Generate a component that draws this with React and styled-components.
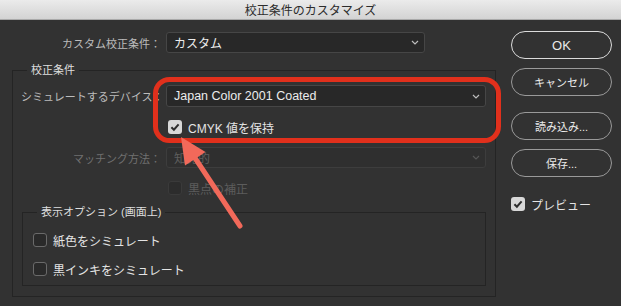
import React from 'react';
import styled, { createGlobalStyle } from 'styled-components';

const GlobalStyle = createGlobalStyle`
    body {
        margin: 0;
        background: #323232;
        font-family: "Liberation Sans", "Noto Sans CJK JP", sans-serif;
    }
`;

const Chevron = ({ color }) => (
    <svg width="8" height="5" viewBox="0 0 8 5">
        <path d="M1 1 L4 4 L7 1" fill="none" stroke={color} strokeWidth="1.2" />
    </svg>
);

const Check = () => (
    <svg width="14" height="14" viewBox="0 0 14 14">
        <path d="M3.4 7.2 L5.9 9.7 L10.6 4.4" fill="none" stroke="#2e2e2e" strokeWidth="2" />
    </svg>
);

const CheckBox = ({ checked, disabled, children }) => (
    <CheckRow>
        <Box $checked={checked} $disabled={disabled}>{checked && <Check />}</Box>
        <CheckText $disabled={disabled}>{children}</CheckText>
    </CheckRow>
);

const Dropdown = ({ value, disabled, big }) => (
    <Select $disabled={disabled}>
        <SelectText $disabled={disabled} $big={big}>{value}</SelectText>
        <Chevron color={disabled ? '#555' : '#bdbdbd'} />
    </Select>
);

// red callout drawn over the dialog
const Annotation = () => (
    <Overlay width="621" height="306" viewBox="0 0 621 306">
        <rect x="155.5" y="79.5" width="343" height="61" rx="14" fill="none" stroke="#e1301c" strokeWidth="5" />
        <line x1="195" y1="158" x2="240" y2="226" stroke="#f2695a" strokeWidth="5" strokeLinecap="round" />
        <polygon points="181,137 205.5,152 185,165.5" fill="#f2695a" />
    </Overlay>
);

const App = () => {
    return (
        <Window>
            <GlobalStyle />
            <TitleBar>校正条件のカスタマイズ</TitleBar>
            <Main>
                <LeftPane>
                    <TopRow>
                        <FieldLabel>カスタム校正条件：</FieldLabel>
                        <Dropdown value="カスタム" />
                    </TopRow>
                    <Group $outer>
                        <Legend>校正条件</Legend>
                        <GroupGrid>
                            <FieldLabel>シミュレートするデバイス：</FieldLabel>
                            <Dropdown value="Japan Color 2001 Coated" big />
                            <span />
                            <CheckBox checked>CMYK 値を保持</CheckBox>
                            <FieldLabel $disabled>マッチング方法：</FieldLabel>
                            <Dropdown value="知覚的" disabled />
                            <span />
                            <CheckBox disabled>黒点の補正</CheckBox>
                        </GroupGrid>
                        <Group>
                            <Legend>表示オプション (画面上)</Legend>
                            <OptionList>
                                <CheckBox>紙色をシミュレート</CheckBox>
                                <CheckBox>黒インキをシミュレート</CheckBox>
                            </OptionList>
                        </Group>
                    </Group>
                </LeftPane>
                <SideBar>
                    <PillButton $primary>OK</PillButton>
                    <PillButton $gap={9}>キャンセル</PillButton>
                    <PillButton $gap={16}>読み込み...</PillButton>
                    <PillButton $gap={9}>保存...</PillButton>
                    <PreviewRow>
                        <CheckBox checked>プレビュー</CheckBox>
                    </PreviewRow>
                </SideBar>
            </Main>
            <Annotation />
        </Window>
    );
};

const Window = styled.div`
    position: relative;
    width: 621px;
    height: 306px;
    overflow: hidden;
    background: #323232;
`;

const TitleBar = styled.div`
    box-sizing: border-box;
    height: 20px;
    display: flex;
    align-items: center;
    justify-content: center;
    background: linear-gradient(#ebebeb, #d3d3d3);
    border-bottom: 1px solid #a9a9a9;
    color: #2c2c2c;
    font-size: 12px;
`;

const Main = styled.div`
    display: flex;
`;

const LeftPane = styled.div`
    box-sizing: border-box;
    width: 496px;
    padding: 12px 0 0 12px;
`;

const TopRow = styled.div`
    display: grid;
    grid-template-columns: 149px 259px;
    column-gap: 5px;
    align-items: center;
    height: 21px;
`;

const FieldLabel = styled.div`
    text-align: right;
    font-size: 11px;
    white-space: nowrap;
    color: ${p => p.$disabled ? '#707070' : '#bcbcbc'};
`;

const Select = styled.div`
    box-sizing: border-box;
    height: 100%;
    display: flex;
    align-items: center;
    justify-content: space-between;
    padding: 0 5px 0 7px;
    border-radius: 3px;
    background: ${p => p.$disabled ? '#2f2f2f' : '#282828'};
    border: 1px solid ${p => p.$disabled ? '#3d3d3d' : '#464646'};
`;

const SelectText = styled.span`
    font-size: ${p => p.$big ? '12.5px' : '12px'};
    color: ${p => p.$disabled ? '#5e5e5e' : '#ececec'};
`;

const Group = styled.fieldset`
    box-sizing: border-box;
    margin: ${p => p.$outer ? '10px 0 0 0' : '7px 0 0 1px'};
    padding: ${p => p.$outer ? '8px 9px 9px 8px' : '0 8px 6px 8px'};
    height: ${p => p.$outer ? '234px' : '81px'};
    border: 1px solid #242424;
    min-width: 0;
`;

const Legend = styled.legend`
    margin-left: 6px;
    padding: 0 4px;
    font-size: 11px;
    line-height: 14px;
    color: #dedede;
`;

const GroupGrid = styled.div`
    display: grid;
    grid-template-columns: 140px 320px;
    grid-template-rows: 22px 20px 21px 20px;
    column-gap: 5px;
    row-gap: 10px;
    align-items: center;
`;

const OptionList = styled.div`
    display: flex;
    flex-direction: column;
    gap: 9px;
    padding-top: 11px;
`;

const CheckRow = styled.div`
    height: 20px;
    display: flex;
    align-items: center;
    gap: 6px;
    padding-left: 2px;
`;

const Box = styled.div`
    box-sizing: border-box;
    width: 14px;
    height: 14px;
    border-radius: 3px;
    display: flex;
    background: ${p => p.$checked ? '#d8d8d8' : p.$disabled ? '#2c2c2c' : '#2a2a2a'};
    border: ${p => p.$checked ? 'none' : `1px solid ${p.$disabled ? '#3a3a3a' : '#6a6a6a'}`};
`;

const CheckText = styled.span`
    font-size: 12px;
    color: ${p => p.$disabled ? '#5c5c5c' : '#e4e4e4'};
`;

const SideBar = styled.div`
    display: flex;
    flex-direction: column;
    width: 101px;
    margin-left: 15px;
    padding-top: 11px;
`;

const PillButton = styled.div`
    box-sizing: border-box;
    height: 28px;
    margin-top: ${p => p.$gap || 0}px;
    border-radius: 14px;
    display: flex;
    align-items: center;
    justify-content: center;
    border: 1px solid ${p => p.$primary ? '#dcdcdc' : '#9a9a9a'};
    color: #eaeaea;
    font-size: ${p => p.$primary ? '13px' : '11px'};
`;

const PreviewRow = styled.div`
    margin-top: 17px;
    margin-left: -2px;
`;

const Overlay = styled.svg`
    position: absolute;
    left: 0;
    top: 0;
    pointer-events: none;
`;

export default App;
